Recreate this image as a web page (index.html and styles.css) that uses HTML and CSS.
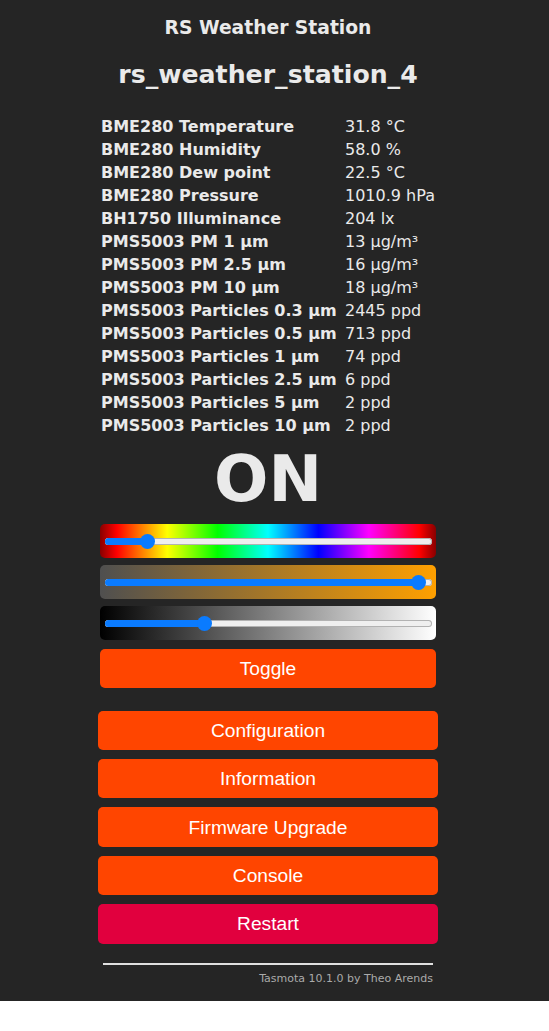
FILE: index.html
```html
<!DOCTYPE html>
<html>
<head>
<meta charset="utf-8">
<title>RS Weather Station - Main Menu</title>
<link rel="stylesheet" href="styles.css">
</head>
<body>
<div class="page">
  <div class="wrap">
    <header class="head">
      <h3 class="title">RS Weather Station</h3>
      <h2 class="device">rs_weather_station_4</h2>
    </header>

    <div class="sensors">
      <div class="lbl">BME280 Temperature</div><div class="val">31.8 °C</div>
      <div class="lbl">BME280 Humidity</div><div class="val">58.0 %</div>
      <div class="lbl">BME280 Dew point</div><div class="val">22.5 °C</div>
      <div class="lbl">BME280 Pressure</div><div class="val">1010.9 hPa</div>
      <div class="lbl">BH1750 Illuminance</div><div class="val">204 lx</div>
      <div class="lbl">PMS5003 PM 1 µm</div><div class="val">13 µg/m³</div>
      <div class="lbl">PMS5003 PM 2.5 µm</div><div class="val">16 µg/m³</div>
      <div class="lbl">PMS5003 PM 10 µm</div><div class="val">18 µg/m³</div>
      <div class="lbl">PMS5003 Particles 0.3 µm</div><div class="val">2445 ppd</div>
      <div class="lbl">PMS5003 Particles 0.5 µm</div><div class="val">713 ppd</div>
      <div class="lbl">PMS5003 Particles 1 µm</div><div class="val">74 ppd</div>
      <div class="lbl">PMS5003 Particles 2.5 µm</div><div class="val">6 ppd</div>
      <div class="lbl">PMS5003 Particles 5 µm</div><div class="val">2 ppd</div>
      <div class="lbl">PMS5003 Particles 10 µm</div><div class="val">2 ppd</div>
    </div>

    <div class="state">ON</div>

    <div class="controls">
      <div class="slider hue">
        <div class="track">
          <div class="fill" style="width:13%"></div>
          <div class="thumb" style="left:13%"></div>
        </div>
      </div>
      <div class="slider ct">
        <div class="track">
          <div class="fill" style="width:96%"></div>
          <div class="thumb" style="left:96%"></div>
        </div>
      </div>
      <div class="slider dim">
        <div class="track">
          <div class="fill" style="width:30.5%"></div>
          <div class="thumb" style="left:30.5%"></div>
        </div>
      </div>
      <button class="btn toggle">Toggle</button>
    </div>

    <nav class="menu">
      <button class="btn">Configuration</button>
      <button class="btn">Information</button>
      <button class="btn">Firmware Upgrade</button>
      <button class="btn">Console</button>
      <button class="btn restart">Restart</button>
    </nav>

    <footer class="foot">
      <hr class="rule">
      <div class="credit">Tasmota 10.1.0 by Theo Arends</div>
    </footer>
  </div>
</div>
</body>
</html>
```

FILE: styles.css
```css
html {
  background: #ffffff;
}
body {
  margin: 0;
  font-family: "DejaVu Sans", Verdana, sans-serif;
  color: #eaeaea;
}
.page {
  background: #252525;
  height: 1001px;
  box-sizing: border-box;
  padding-left: 98px;
}
.wrap {
  width: 340px;
}
.head {
  text-align: center;
  padding-top: 16px;
}
.title {
  margin: 0;
  font-size: 18.72px;
  line-height: 24px;
  font-weight: bold;
}
.device {
  margin: 20px 0 0;
  font-size: 25.2px;
  line-height: 30px;
  font-weight: bold;
}
.sensors {
  display: grid;
  grid-template-columns: 244px auto;
  margin: 24.5px 0 0 3px;
  font-size: 16px;
  line-height: 23px;
}
.lbl {
  font-weight: bold;
  white-space: nowrap;
}
.val {
  white-space: nowrap;
}
.state {
  margin-top: 5.5px;
  text-align: center;
  font-weight: bold;
  font-size: 64px;
  line-height: 74px;
}
.controls {
  margin: 8px 2px 0;
  display: flex;
  flex-direction: column;
  gap: 7px;
}
.slider {
  height: 34px;
  border-radius: 5px;
  display: flex;
  align-items: center;
  padding: 0 4px 0 5px;
}
.hue {
  background: linear-gradient(to right, #800, #f00 5%, #ff0 20%, #0f0 35%, #0ff 50%, #00f 65%, #f0f 80%, #f00 95%, #800);
}
.ct {
  background: linear-gradient(to right, #4f4f4f, #ffa000);
}
.dim {
  background: linear-gradient(to right, #000, #fff);
}
.track {
  position: relative;
  flex: 1;
  height: 7px;
  border-radius: 4px;
  background: #efefef;
  box-shadow: inset 0 0 0 1px #b2b2b2;
}
.fill {
  height: 100%;
  border-radius: 4px;
  background: #0a7bff;
}
.thumb {
  position: absolute;
  top: 50%;
  width: 15px;
  height: 15px;
  margin: -7.5px 0 0 -7.5px;
  border-radius: 50%;
  background: #0a7bff;
}
.btn {
  display: block;
  width: 100%;
  height: 39.5px;
  border: 0;
  border-radius: 5px;
  background: #ff4500;
  color: #ffffff;
  font-family: "Liberation Sans", Arial, sans-serif;
  font-size: 19.2px;
  line-height: 39px;
  padding: 0;
}
.toggle {
  margin-top: 1.5px;
}
.menu {
  margin-top: 22.5px;
  display: flex;
  flex-direction: column;
  gap: 8.9px;
}
.restart {
  background: #e1003e;
}
.foot {
  padding: 0 5px;
}
.rule {
  margin: 19px 0 0;
  border: 0;
  height: 2px;
  background: #e0e0e0;
}
.credit {
  text-align: right;
  font-size: 11px;
  line-height: 14px;
  margin-top: 7.5px;
  color: #aaaaaa;
}
```
